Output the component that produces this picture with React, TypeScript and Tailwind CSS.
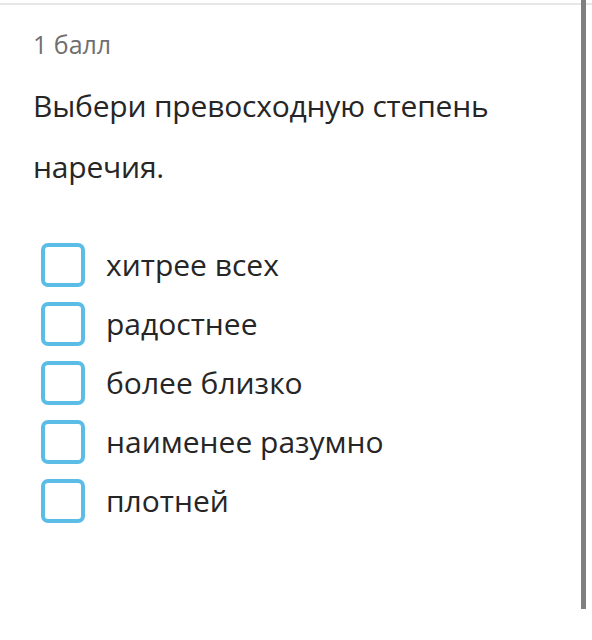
const options = ['хитрее всех', 'радостнее', 'более близко', 'наименее разумно', 'плотней'];

export default function App() {
  return (
    <div className="relative h-[640px] w-[592px] overflow-hidden bg-white font-['Open_Sans',sans-serif]">
      <div className="mt-[3px] h-[2px] w-full bg-[#e6e6e6]" />

      <div className="pl-[33px] pt-[24px]">
        <div className="text-[25px] leading-[30px] text-[#6f6f6f]">1 балл</div>

        <div className="mt-[16px] w-[500px] text-[30px] tracking-[-0.2px] leading-[61px] text-[#262626]">
          Выбери превосходную степень наречия.
        </div>

        <div className="mt-[46px] flex flex-col gap-[15px] pl-[8px]">
          {options.map((o) => (
            <label key={o} className="flex items-center gap-[21px]">
              <span className="h-[44px] w-[44px] shrink-0 rounded-[7px] border-[4px] border-[#5bbde6] bg-white" />
              <span className="text-[30px] leading-[44px] text-[#262626]">{o}</span>
            </label>
          ))}
        </div>
      </div>

      {/* scrollbar */}
      <div className="absolute right-[6px] top-0 h-[609px] w-[5px] bg-[#7f7f7f]" />
    </div>
  );
}
